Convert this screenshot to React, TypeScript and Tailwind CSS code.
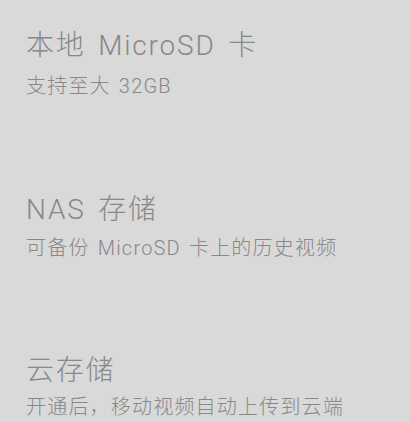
const items = [
  { title: '本地 MicroSD 卡', desc: '支持至大 32GB', gap: 'mt-[16px]', top: 'mt-[32px]' },
  { title: 'NAS 存储', desc: '可备份 MicroSD 卡上的历史视频', gap: 'mt-[14px]', top: 'mt-[100px]' },
  { title: '云存储', desc: '开通后，移动视频自动上传到云端', gap: 'mt-[12px]', top: 'mt-[99px]' },
];

export default function App() {
  return (
    <div
      className="w-[410px] h-[422px] bg-[#d9d9d9] overflow-hidden px-[26px] flex flex-col"
      style={{ fontFamily: 'Roboto, "Noto Sans CJK SC", sans-serif' }}
    >
      {items.map((item) => (
        <div key={item.title} className={`flex flex-col ${item.top}`}>
          <div className="text-[28px] leading-none font-light tracking-[1.8px] [word-spacing:4px] text-[#888888] whitespace-nowrap">
            {item.title}
          </div>
          <div className={`text-[20px] leading-none font-light tracking-[1.2px] [word-spacing:2px] text-[#888888] whitespace-nowrap ${item.gap}`}>
            {item.desc}
          </div>
        </div>
      ))}
    </div>
  );
}
